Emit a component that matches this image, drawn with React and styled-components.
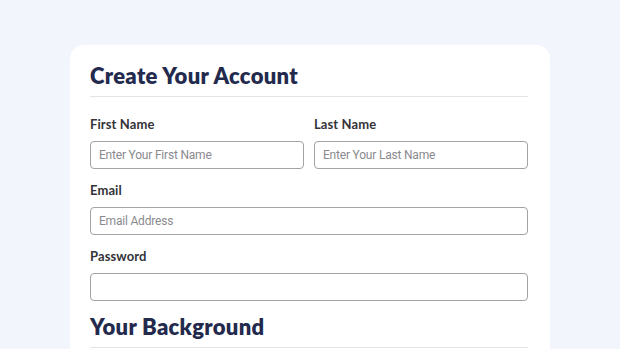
import React from "react";
import styled, { createGlobalStyle } from "styled-components";

const Global = createGlobalStyle`
  html, body { margin: 0; padding: 0; background: #f3f5fd; }
  body { font-family: Lato, "Noto Sans", sans-serif; }
  * { box-sizing: border-box; }
`;

const Page = styled.div`
  width: 620px;
  height: 349px;
  overflow: hidden;
  background: #f3f5fd;
  padding-top: 45px;
  display: flex;
  justify-content: center;
`;

const Card = styled.div`
  width: 480px;
  background: #fff;
  border-radius: 14px;
  padding: 18px 22px 40px 20px;
  align-self: flex-start;
`;

const Heading = styled.h2`
  margin: 0;
  font-family: Lato, sans-serif;
  font-weight: 800;
  font-size: 22px;
  line-height: 26px;
  color: #232a4d;
  letter-spacing: 0.3px;
  padding-bottom: ${(p) => p.$pb || 7}px;
  border-bottom: 1px solid #e4e4e8;
  margin-top: ${(p) => p.$mt || 0}px;
`;

const Row = styled.div`
  display: grid;
  grid-template-columns: ${(p) => (p.$cols === 2 ? "1fr 1fr" : "1fr")};
  column-gap: 10px;
  margin-top: ${(p) => p.$mt}px;
`;

const Field = styled.div`
  display: flex;
  flex-direction: column;
`;

const Label = styled.label`
  font-family: Lato, sans-serif;
  font-weight: 700;
  font-size: 13px;
  line-height: 16px;
  color: #333338;
  letter-spacing: 0.1px;
  margin-bottom: 9px;
`;

const Input = styled.input`
  height: 28px;
  width: 100%;
  border: 1px solid #a3a3a6;
  border-radius: 4px;
  padding: 0 8px;
  font-family: Roboto, "Open Sans", sans-serif;
  font-size: 12px;
  letter-spacing: -0.2px;
  color: #333;
  background: #fff;
  outline: none;
  &::placeholder { color: #8a8a8e; }
`;

export default function App() {
  return (
    <>
      <Global />
      <Page>
        <Card>
          <Heading>Create Your Account</Heading>
          <Row $cols={2} $mt={19}>
            <Field>
              <Label>First Name</Label>
              <Input placeholder="Enter Your First Name" />
            </Field>
            <Field>
              <Label>Last Name</Label>
              <Input placeholder="Enter Your Last Name" />
            </Field>
          </Row>
          <Row $mt={13}>
            <Field>
              <Label>Email</Label>
              <Input placeholder="Email Address" />
            </Field>
          </Row>
          <Row $mt={13}>
            <Field>
              <Label>Password</Label>
              <Input type="password" />
            </Field>
          </Row>
          <Heading $mt={13} $pb={7}>Your Background</Heading>
        </Card>
      </Page>
    </>
  );
}
